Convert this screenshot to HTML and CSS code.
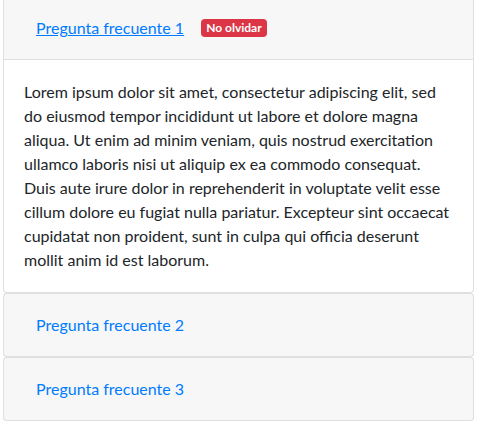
FILE: index.html
```html
<!DOCTYPE html>
<html lang="es">
<head>
    <meta charset="UTF-8">
    <meta name="viewport" content="width=device-width, initial-scale=1.0">
    <title>Preguntas frecuentes</title>
    <link rel="stylesheet" href="styles.css">
</head>
<body>
    <div class="accordion" id="faq">
        <!-- Pregunta 1 (abierta) -->
        <div class="card">
            <div class="card-header">
                <div class="faq-title">
                    <a href="#" class="faq-link active">Pregunta frecuente 1</a>
                    <span class="badge">No olvidar</span>
                </div>
            </div>
            <div class="card-body">
                Lorem ipsum dolor sit amet, consectetur adipiscing elit, sed do eiusmod tempor incididunt ut labore et dolore magna aliqua. Ut enim ad minim veniam, quis nostrud exercitation ullamco laboris nisi ut aliquip ex ea commodo consequat. Duis aute irure dolor in reprehenderit in voluptate velit esse cillum dolore eu fugiat nulla pariatur. Excepteur sint occaecat cupidatat non proident, sunt in culpa qui officia deserunt mollit anim id est laborum.
            </div>
        </div>

        <div class="card">
            <div class="card-header">
                <div class="faq-title">
                    <a href="#" class="faq-link">Pregunta frecuente 2</a>
                </div>
            </div>
        </div>

        <div class="card">
            <div class="card-header">
                <div class="faq-title">
                    <a href="#" class="faq-link">Pregunta frecuente 3</a>
                </div>
            </div>
        </div>
    </div>
</body>
</html>
```

FILE: styles.css
```css
/* Base */
body {
    margin: 0;
    font-family: 'Lato', 'Noto Sans', sans-serif;
    font-size: 16px;
    line-height: 1.5;
    color: #212529;
    background-color: #fff;
}

/* Accordion (page is scrolled a few pixels) */
.accordion {
    width: 471px;
    margin: -4px 0 0 3px;
}
.card {
    display: flex;
    flex-direction: column;
    background-color: #fff;
    border: 1px solid rgba(0, 0, 0, 0.125);
    border-radius: 4px;
}
.card-header {
    padding: 12px 20px;
    background-color: rgba(0, 0, 0, 0.03);
}
.card-body {
    padding: 20px;
    border-top: 1px solid rgba(0, 0, 0, 0.125);
}

/* Header line: link + badge */
.faq-title {
    display: flex;
    align-items: center;
    height: 38px;
}
.faq-link {
    padding: 6px 12px;
    color: #007bff;
    text-decoration: none;
}
.faq-link.active {
    text-decoration: underline;
}
.badge {
    margin-left: 5px;
    padding: 3px 5px;
    font-size: 12px;
    font-weight: 700;
    line-height: 1;
    color: #fff;
    background-color: #dc3545;
    border-radius: 4px;
}
```
